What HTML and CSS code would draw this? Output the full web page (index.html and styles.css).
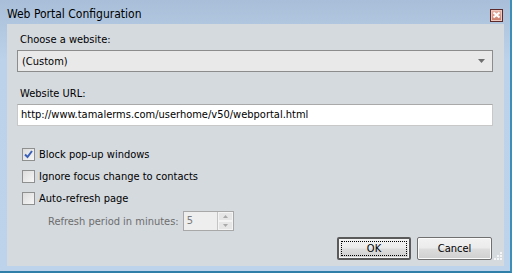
FILE: index.html
```html
<!DOCTYPE html>
<html>
<head>
<meta charset="utf-8">
<link rel="stylesheet" href="styles.css">
</head>
<body>
<div class="window">
  <div class="titlebar">
    <span class="title">Web Portal Configuration</span>
    <span class="close"><svg width="9" height="8" viewBox="0 0 9 8"><path d="M1.5 1.5 L7.5 6.5 M7.5 1.5 L1.5 6.5" stroke="#fff" stroke-width="2"/></svg></span>
  </div>
  <div class="client">
    <div class="label">Choose a website:</div>
    <div class="combo"><span>(Custom)</span><svg class="arrow" width="7" height="4" viewBox="0 0 7 4"><path d="M0 0 H7 L3.5 4Z" fill="#6f6f6f"/></svg></div>
    <div class="label label-url">Website URL:</div>
    <div class="textbox">http://www.tamalerms.com/userhome/v50/webportal.html</div>
    <div class="checks">
      <div class="check"><span class="box checked"><svg width="9" height="9" viewBox="0 0 9 9"><path d="M1 4.5 L3.5 7 L8 1" stroke="#3a5fb8" stroke-width="2" fill="none"/></svg></span><span class="ctext">Block pop-up windows</span></div>
      <div class="check"><span class="box"></span><span class="ctext">Ignore focus change to contacts</span></div>
      <div class="check"><span class="box"></span><span class="ctext">Auto-refresh page</span></div>
      <div class="refresh"><span class="rtext">Refresh period in minutes:</span><span class="spin"><span class="sval">5</span><span class="sbtns"><span class="sb"><svg width="5" height="3" viewBox="0 0 5 3"><path d="M0 3 H5 L2.5 0Z" fill="#a9a9a9"/></svg></span><span class="sb"><svg width="5" height="3" viewBox="0 0 5 3"><path d="M0 0 H5 L2.5 3Z" fill="#a9a9a9"/></svg></span></span></span></div>
    </div>
    <div class="buttons">
      <div class="btn default"><span class="focus">OK</span></div>
      <div class="btn cancel">Cancel</div>
    </div>
    <svg class="grip" width="9" height="9" viewBox="0 0 9 9" fill="#f4f6f8"><rect x="6" y="0" width="2" height="2"/><rect x="3" y="3" width="2" height="2"/><rect x="6" y="3" width="2" height="2"/><rect x="0" y="6" width="2" height="2"/><rect x="3" y="6" width="2" height="2"/><rect x="6" y="6" width="2" height="2"/></svg>
  </div>
</div>
</body>
</html>
```
FILE: styles.css
```css
html, body {
  margin: 0;
  padding: 0;
  width: 512px;
  height: 273px;
  overflow: hidden;
}
body {
  font-family: "DejaVu Sans Condensed", "DejaVu Sans", sans-serif;
  font-size: 11px;
  color: #000;
}
.window {
  box-sizing: border-box;
  width: 512px;
  height: 273px;
  background: linear-gradient(#a9bfd9, #bcd2ea 60px, #bcd3eb);
  border-right: 2px solid #3d8fb8;
  border-bottom: 2px solid #2f7fa8;
  padding: 0 6px 5px 7px;
  display: flex;
  flex-direction: column;
}
.titlebar {
  height: 24px;
  display: flex;
  align-items: center;
  justify-content: space-between;
}
.title {
  font-size: 12px;
  padding-top: 4px;
  color: #000;
}
.close {
  width: 11px;
  height: 11px;
  border: 1px solid #5c2a2a;
  background: linear-gradient(#e6b3a6, #c97a68);
  display: flex;
  align-items: center;
  justify-content: center;
  margin-right: 1px;
  margin-top: 6px;
  box-shadow: inset 0 0 0 1px #eec9bf;
}
.client {
  flex: 1;
  background: #d5dadf;
  padding: 8px 12px 0 10px;
  display: flex;
  flex-direction: column;
  position: relative;
}
.label {
  padding-left: 3px;
  height: 15px;
  line-height: 15px;
}
.combo {
  margin-top: 3px;
  margin-right: -1px;
  height: 20px;
  border: 1px solid #8c8c8c;
  background: #e9e9e9;
  display: flex;
  align-items: center;
  justify-content: space-between;
  padding: 0 7px 0 4px;
}
.label-url {
  margin-top: 14px;
}
.textbox {
  margin-top: 3px;
  margin-right: -1px;
  height: 20px;
  border: 1px solid #c8c8c8;
  border-top-color: #a9a9a9;
  background: #fff;
  line-height: 20px;
  padding-left: 3px;
}
.checks {
  margin-top: 22px;
  padding-left: 5px;
  display: flex;
  flex-direction: column;
  gap: 9px;
}
.check {
  display: flex;
  align-items: center;
  gap: 4px;
  height: 13px;
}
.box {
  box-sizing: border-box;
  width: 13px;
  height: 13px;
  border: 1px solid #8e8f8f;
  background: linear-gradient(135deg, #dcdcdc, #f6f6f6);
  display: flex;
  align-items: center;
  justify-content: center;
}
.refresh {
  display: flex;
  align-items: center;
  padding-left: 26px;
  margin-top: -3px;
  color: #6d6d6d;
  gap: 4px;
}
.spin {
  box-sizing: border-box;
  width: 51px;
  height: 20px;
  border: 1px solid #a8a8a8;
  background: #eeeeef;
  display: flex;
  justify-content: space-between;
}
.sval {
  padding-left: 3px;
  line-height: 18px;
  color: #7a7a7a;
}
.sbtns {
  width: 15px;
  display: flex;
  flex-direction: column;
  border-left: 1px solid #c4c4c4;
}
.sb {
  flex: 1;
  display: flex;
  align-items: center;
  justify-content: center;
  background: #e6e6e6;
  border: 1px solid #f4f4f4;
}
.buttons {
  margin-top: auto;
  margin-bottom: 6px;
  display: flex;
  justify-content: flex-end;
  gap: 6px;
}
.btn {
  box-sizing: border-box;
  width: 74px;
  height: 23px;
  border: 1px solid #707070;
  border-radius: 2px;
  background: linear-gradient(#f2f2f2 0%, #ebebeb 48%, #dddddd 52%, #cfcfcf 100%);
  box-shadow: inset 0 0 0 1px #fbfbfb;
  display: flex;
  align-items: center;
  justify-content: center;
}
.btn.cancel {
  width: 75px;
}
.btn.default {
  border: 2px solid #5a5a5a;
  box-shadow: inset 0 0 0 1px #f5f5f5;
  padding: 2px;
}
.focus {
  box-sizing: border-box;
  width: 100%;
  height: 100%;
  border: 1px dotted #000;
  display: flex;
  align-items: center;
  justify-content: center;
}
.grip {
  position: absolute;
  right: 1px;
  bottom: 5px;
}
```
